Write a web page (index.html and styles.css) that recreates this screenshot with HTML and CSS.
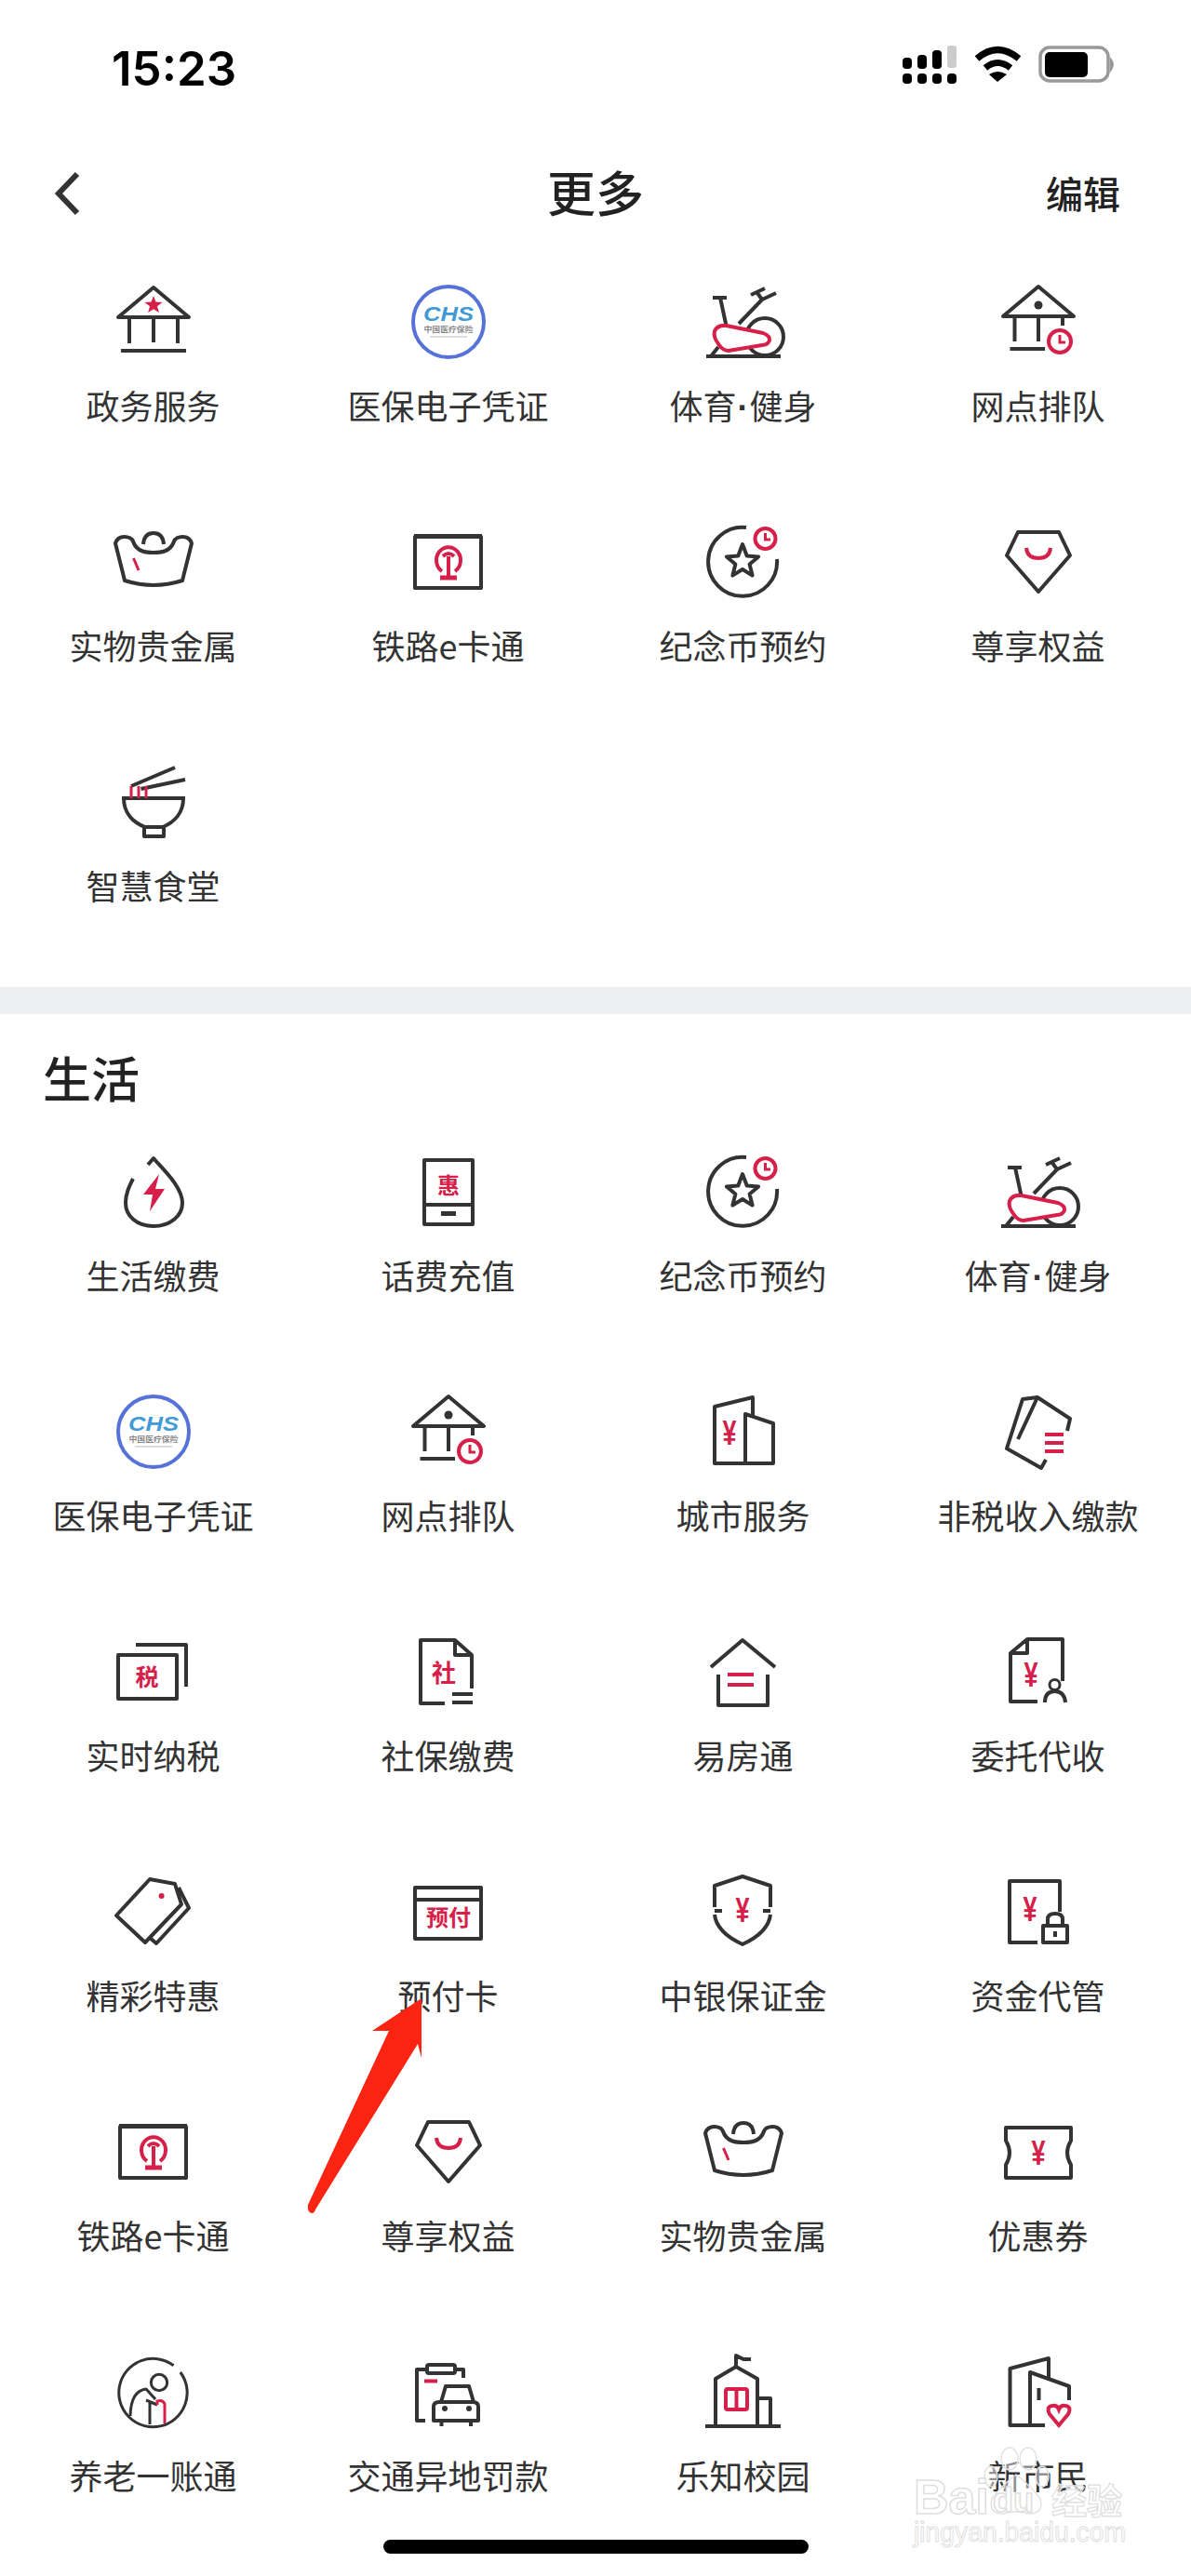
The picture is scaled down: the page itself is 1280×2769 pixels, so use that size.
FILE: index.html
```html
<!DOCTYPE html>
<html lang="zh">
<head>
    <meta charset="utf-8">
    <title>更多</title>
    <link rel="stylesheet" href="styles.css">
</head>
<body>
<svg class="defs" width="0" height="0">
    <symbol id="i-gov" viewBox="0 0 100 100">
        <path class="ln" d="M12 45 L50 13 L88 45 Z M24 45 V73 M50 45 V72 M76 45 V73 M15 81 H85"/>
        <polygon class="rf" points="50,22 52.5,28.6 59.5,28.9 54,33.3 55.9,40.1 50,36.2 44.1,40.1 46,33.3 40.5,28.9 47.5,28.6"/>
    </symbol>
    <symbol id="i-chs" viewBox="0 0 100 100">
        <circle class="blue" cx="50" cy="50" r="38"/>
        <rect x="30" y="65" width="40" height="2" fill="#ddd"/>
    </symbol>
    <symbol id="i-bike" viewBox="0 0 100 100">
        <path class="ln" d="M10 87 H90 M17 24 H32 M25 24 L31.5 54 M45 52 L70 26 L85 19 M58 21 L73 14 M65 19 L70 26 M15 87 L23 77"/>
        <circle class="ln" cx="73" cy="66" r="20"/>
        <path class="rd white" d="M31.5 54 L71 62 Q79 65 78 70 Q76 75 70 75 L34 81 Q28 81 24 75 Q17 66 19 60 Q22 53 31.5 54 Z"/>
    </symbol>
    <symbol id="i-queue" viewBox="0 0 100 100">
        <path class="ln" d="M12 44 L50 12 L88 44 Z M24.5 44 V71 M50 44 V71 M76 44 V54 M19.5 79 H57"/>
        <circle class="dk" cx="50" cy="32" r="4.5"/>
        <circle class="rd" cx="73" cy="71" r="12"/>
        <path class="rd thin" d="M73 64 V72 H79"/>
    </symbol>
    <symbol id="i-ingot" viewBox="0 0 100 100">
        <path class="ln" d="M28 28 C26 22 12 20 9 30 L19 70 Q50 80 81 70 L91 30 C88 20 74 22 72 28 C68 40 56 40 50 40 C44 40 32 40 28 28 Z M39 31 Q40 19 50 19 Q60 19 61 31"/>
        <path class="rd thin" d="M28.5 46 L34 59"/>
    </symbol>
    <symbol id="i-rail" viewBox="0 0 100 100">
        <rect class="ln" x="14" y="23" width="71" height="55"/>
        <path class="ln" d="M13 22 H86 M13 78 H86"/>
        <path class="rd" d="M43 60 A13 14 0 1 1 57 60 M44 44 Q50 38 56 44 M50 44 V66"/>
        <path class="rd thick" d="M41 67 H59"/>
    </symbol>
    <symbol id="i-coin" viewBox="0 0 100 100">
        <path class="ln" d="M53 13 A37 37 0 1 0 86 47"/>
        <polygon class="ln" points="49,31 53.7,43.5 66.1,44.4 56.6,52.5 59.6,64.6 49,58 38.4,64.6 41.4,52.5 31.9,44.4 44.3,43.5"/>
        <circle class="rd" cx="73.5" cy="25" r="11"/>
        <path class="rd thin" d="M73.5 19 V26 H79"/>
    </symbol>
    <symbol id="i-vip" viewBox="0 0 100 100">
        <path class="ln" d="M28 18 H72 L84 43 L50 82 L16 43 Z"/>
        <path class="rd" d="M37 35 Q38 46 50 46 Q62 46 63 35"/>
    </symbol>
    <symbol id="i-bowl" viewBox="0 0 100 100">
        <path class="ln" d="M16 46 H84 M18 46 C18 62 28 72 41 77 H60 C72 72 82 62 82 46 M40 77 V87 H61 V77 M26 33 L73 13 M36.5 36 L84 26"/>
        <path class="rd thin" d="M26 33 V46 M34 33 V46 M42 33 V46"/>
    </symbol>
    <symbol id="i-drop" viewBox="0 0 100 100">
        <path class="ln" d="M44 21 L50 14 C58 24 81 44 81 62 C81 76 68 87 50 87 C32 87 20 76 20 62 C20 52 24 44 28 36"/>
        <polygon class="rf" points="56,31 39,53 49,53 46,71 62,47 52,47"/>
    </symbol>
    <symbol id="i-phone" viewBox="0 0 100 100">
        <rect class="ln" x="24" y="16" width="52" height="69"/>
        <path class="ln" d="M24 64 H76"/>
        <rect class="dk" x="42" y="71" width="16" height="5"/>
    </symbol>
    <symbol id="i-city" viewBox="0 0 100 100">
        <path class="ln" d="M60 33 V13 L19 23 V84 H82 V41 L52 31 V84"/>
    </symbol>
    <symbol id="i-cards" viewBox="0 0 100 100">
        <path class="ln" d="M81 49 L84 36 L49 13 L28 58 M49 13 L33 15 L16 68 L53 89 L58 80"/>
        <path class="rd" d="M57 53 H77 M57 62 H77 M57 71 H77"/>
    </symbol>
    <symbol id="i-tax" viewBox="0 0 100 100">
        <path class="ln" d="M31 21 H85 V66"/>
        <rect class="ln" x="12" y="32" width="63" height="47"/>
    </symbol>
    <symbol id="i-social" viewBox="0 0 100 100">
        <path class="ln" d="M46 84 H20 V16 H57 L75 32 V68 M57 16 V32 H75 M54 74 H76 M54 83 H76"/>
    </symbol>
    <symbol id="i-house" viewBox="0 0 100 100">
        <path class="ln" d="M15 45 L49 16 L84 45 M23 53 V86 H76 V53"/>
        <path class="rd" d="M33 53 H61 M33 64 H61"/>
    </symbol>
    <symbol id="i-entrust" viewBox="0 0 100 100">
        <path class="ln" d="M76 60 V15 H38 L20 30 V82 H49 M38 15 V30 H20 M57 83 Q57 71 67.5 71 Q78 71 79 83"/>
        <circle class="ln thin" cx="67.5" cy="64" r="5.5"/>
    </symbol>
    <symbol id="i-tags" viewBox="0 0 100 100">
        <path class="ln" d="M46 15 L73 20 L80 42 L41 83 L10 54 Z M77 24 L88 46 L53 84 L46 78"/>
        <circle class="rf" cx="58.6" cy="33" r="3"/>
    </symbol>
    <symbol id="i-prepaid" viewBox="0 0 100 100">
        <rect class="ln" x="14" y="24" width="71" height="55"/>
        <path class="ln" d="M13 37 H86"/>
    </symbol>
    <symbol id="i-shield" viewBox="0 0 100 100">
        <path class="ln" d="M19 45 V22 L49 12 L79 22 V45 M19 53 Q21 72 49 85 Q77 72 79 53 M19 49 H27 M71 49 H79"/>
    </symbol>
    <symbol id="i-lock" viewBox="0 0 100 100">
        <path class="ln" d="M49 83 H19 V17 H73 V50"/>
        <rect class="ln" x="55" y="65" width="26" height="18"/>
        <path class="ln" d="M60 65 V58 Q60 52 68 52 Q76 52 76 58 V65"/>
        <rect class="dk" x="66" y="71" width="4" height="6"/>
    </symbol>
    <symbol id="i-coupon" viewBox="0 0 100 100">
        <path class="ln" d="M15 24 H85 V38 Q77 51 85 64 V78 H15 V64 Q23 51 15 38 Z"/>
    </symbol>
    <symbol id="i-pension" viewBox="0 0 100 100">
        <path class="ln thin" d="M71.5 21.7 A36.7 36.7 0 1 0 78.8 29"/>
        <circle class="ln thin" cx="56" cy="40" r="8.7"/>
        <path class="ln thin" d="M25 76 Q25.5 49 42 47 L52 58 M42 59 L54 64 M46 62 V85"/>
        <path class="rd thin" d="M54 64 V60 Q60 58 62 63 V84"/>
    </symbol>
    <symbol id="i-fine" viewBox="0 0 100 100">
        <path class="ln" d="M27 26 H16 V81 H25 M57 26 H66 V35 M42 61 L47 44 H72 L77 61 M34 77 V66 Q34 61 40 61 H76 Q82 61 82 66 V81 H34 Z M42.5 81 V87 M74 81 V87"/>
        <rect class="ln" x="27" y="21" width="30" height="9" rx="2"/>
        <path class="rd" d="M24 38.5 H38"/>
        <circle class="dk" cx="46" cy="68" r="3"/>
        <circle class="dk" cx="72" cy="68" r="3"/>
    </symbol>
    <symbol id="i-school" viewBox="0 0 100 100">
        <path class="ln" d="M9 87 H90 M20 87 V36 L42 23 L65 36 V87 M65 57 H79 V87 M42 23 V11 L50 15 H58"/>
        <rect class="rd" x="31" y="47" width="23" height="22" rx="2"/>
        <path class="rd" d="M42.5 47 V69"/>
    </symbol>
    <symbol id="i-citizen" viewBox="0 0 100 100">
        <path class="ln" d="M57 86 H19.5 V25 L61 14 V36 M41 86 V29 L83 44 V59 M50.5 46 V59"/>
        <path class="rd" d="M72 86 L62 74 Q58 66 65 65 Q70 64 72 69 Q74 64 79 65 Q86 66 82 74 Z"/>
    </symbol>
</svg>

<div class="page">
    <div class="status">
        <span class="time">15:23</span>
        <svg class="status-icons" viewBox="950 40 260 70">
            <g fill="#000">
                <rect x="970" y="82" width="10" height="11" rx="4"/>
                <rect x="986" y="82" width="10" height="11" rx="4"/>
                <rect x="1002" y="82" width="10" height="11" rx="4"/>
                <rect x="1018" y="82" width="10" height="11" rx="4"/>
                <rect x="970" y="65" width="10" height="12" rx="4"/>
                <rect x="986" y="62" width="10" height="15" rx="4"/>
                <rect x="1002" y="57" width="10" height="20" rx="4"/>
            </g>
            <rect x="1018" y="52" width="10" height="24" rx="3" fill="#ccc"/>
            <path d="M1050 66 Q1072 47 1095 66 M1059 76 Q1072 65 1086 76" fill="none" stroke="#000" stroke-width="7"/>
            <path d="M1063 83 Q1072 77 1082 83 L1072 91 Z" fill="#000"/>
            <rect x="1118" y="54" width="73" height="36" rx="10" fill="none" stroke="#999" stroke-width="3.5"/>
            <rect x="1123" y="59" width="46" height="27" rx="5" fill="#000"/>
            <path d="M1194 67 Q1198 72 1194 78 Z" fill="#999" stroke="#999" stroke-width="2"/>
        </svg>
    </div>

    <div class="nav">
        <svg class="back" viewBox="0 0 30 50"><path d="M25 4 L5 25 L25 46"/></svg>
        <div class="nav-title">更多</div>
        <div class="nav-edit">编辑</div>
    </div>

    <div class="grid first">
        <div class="item"><svg class="ic" viewBox="0 0 100 100"><use href="#i-gov"/></svg><span class="lbl">政务服务</span></div>
        <div class="item"><svg class="ic" viewBox="0 0 100 100"><use href="#i-chs"/><text class="chs" x="50" y="49" textLength="54" lengthAdjust="spacingAndGlyphs">CHS</text><text class="chs-sub" x="50" y="61" textLength="53" lengthAdjust="spacingAndGlyphs">中国医疗保险</text></svg><span class="lbl">医保电子凭证</span></div>
        <div class="item"><svg class="ic" viewBox="0 0 100 100"><use href="#i-bike"/></svg><span class="lbl">体育<span class="mid">·</span>健身</span></div>
        <div class="item"><svg class="ic" viewBox="0 0 100 100"><use href="#i-queue"/></svg><span class="lbl">网点排队</span></div>
        <div class="item"><svg class="ic" viewBox="0 0 100 100"><use href="#i-ingot"/></svg><span class="lbl">实物贵金属</span></div>
        <div class="item"><svg class="ic" viewBox="0 0 100 100"><use href="#i-rail"/></svg><span class="lbl">铁路e卡通</span></div>
        <div class="item"><svg class="ic" viewBox="0 0 100 100"><use href="#i-coin"/></svg><span class="lbl">纪念币预约</span></div>
        <div class="item"><svg class="ic" viewBox="0 0 100 100"><use href="#i-vip"/></svg><span class="lbl">尊享权益</span></div>
        <div class="item"><svg class="ic" viewBox="0 0 100 100"><use href="#i-bowl"/></svg><span class="lbl">智慧食堂</span></div>
    </div>

    <div class="divider"></div>

    <h2 class="section-title">生活</h2>

    <div class="grid">
        <div class="item"><svg class="ic" viewBox="0 0 100 100"><use href="#i-drop"/></svg><span class="lbl">生活缴费</span></div>
        <div class="item"><svg class="ic" viewBox="0 0 100 100"><use href="#i-phone"/><text class="glyph" x="50" y="52" font-size="24">惠</text></svg><span class="lbl">话费充值</span></div>
        <div class="item"><svg class="ic" viewBox="0 0 100 100"><use href="#i-coin"/></svg><span class="lbl">纪念币预约</span></div>
        <div class="item"><svg class="ic" viewBox="0 0 100 100"><use href="#i-bike"/></svg><span class="lbl">体育<span class="mid">·</span>健身</span></div>

        <div class="item"><svg class="ic" viewBox="0 0 100 100"><use href="#i-chs"/><text class="chs" x="50" y="49" textLength="54" lengthAdjust="spacingAndGlyphs">CHS</text><text class="chs-sub" x="50" y="61" textLength="53" lengthAdjust="spacingAndGlyphs">中国医疗保险</text></svg><span class="lbl">医保电子凭证</span></div>
        <div class="item"><svg class="ic" viewBox="0 0 100 100"><use href="#i-queue"/></svg><span class="lbl">网点排队</span></div>
        <div class="item"><svg class="ic" viewBox="0 0 100 100"><use href="#i-city"/><text class="yen" x="35" y="64" textLength="15" lengthAdjust="spacingAndGlyphs">¥</text></svg><span class="lbl">城市服务</span></div>
        <div class="item"><svg class="ic" viewBox="0 0 100 100"><use href="#i-cards"/></svg><span class="lbl">非税收入缴款</span></div>

        <div class="item"><svg class="ic" viewBox="0 0 100 100"><use href="#i-tax"/><text class="glyph" x="43" y="65" font-size="25">税</text></svg><span class="lbl">实时纳税</span></div>
        <div class="item"><svg class="ic" viewBox="0 0 100 100"><use href="#i-social"/><text class="glyph" x="45" y="61" font-size="26">社</text></svg><span class="lbl">社保缴费</span></div>
        <div class="item"><svg class="ic" viewBox="0 0 100 100"><use href="#i-house"/></svg><span class="lbl">易房通</span></div>
        <div class="item"><svg class="ic" viewBox="0 0 100 100"><use href="#i-entrust"/><text class="yen" x="42" y="66" textLength="15" lengthAdjust="spacingAndGlyphs">¥</text></svg><span class="lbl">委托代收</span></div>

        <div class="item"><svg class="ic" viewBox="0 0 100 100"><use href="#i-tags"/></svg><span class="lbl">精彩特惠</span></div>
        <div class="item"><svg class="ic" viewBox="0 0 100 100"><use href="#i-prepaid"/><text class="glyph" x="50" y="65" font-size="24">预付</text></svg><span class="lbl">预付卡</span></div>
        <div class="item"><svg class="ic" viewBox="0 0 100 100"><use href="#i-shield"/><text class="yen" x="49" y="61" textLength="15" lengthAdjust="spacingAndGlyphs">¥</text></svg><span class="lbl">中银保证金</span></div>
        <div class="item"><svg class="ic" viewBox="0 0 100 100"><use href="#i-lock"/><text class="yen" x="41" y="60" textLength="15" lengthAdjust="spacingAndGlyphs">¥</text></svg><span class="lbl">资金代管</span></div>

        <div class="item"><svg class="ic" viewBox="0 0 100 100"><use href="#i-rail"/></svg><span class="lbl">铁路e卡通</span></div>
        <div class="item"><svg class="ic" viewBox="0 0 100 100"><use href="#i-vip"/></svg><span class="lbl">尊享权益</span></div>
        <div class="item"><svg class="ic" viewBox="0 0 100 100"><use href="#i-ingot"/></svg><span class="lbl">实物贵金属</span></div>
        <div class="item"><svg class="ic" viewBox="0 0 100 100"><use href="#i-coupon"/><text class="yen" x="50" y="64" textLength="15" lengthAdjust="spacingAndGlyphs">¥</text></svg><span class="lbl">优惠券</span></div>

        <div class="item"><svg class="ic" viewBox="0 0 100 100"><use href="#i-pension"/></svg><span class="lbl">养老一账通</span></div>
        <div class="item"><svg class="ic" viewBox="0 0 100 100"><use href="#i-fine"/></svg><span class="lbl">交通异地罚款</span></div>
        <div class="item"><svg class="ic" viewBox="0 0 100 100"><use href="#i-school"/></svg><span class="lbl">乐知校园</span></div>
        <div class="item"><svg class="ic" viewBox="0 0 100 100"><use href="#i-citizen"/></svg><span class="lbl">新市民</span></div>
    </div>

    <div class="home-bar"></div>

    <!-- annotation and watermark sit on top of the screenshot -->
    <svg class="arrow" viewBox="0 0 130 240">
        <path d="M128 3 L75 38 L93 38 L6 225 Q5 233 10 234 Q13 234 14 230 L124 52 L128 67 Z"/>
    </svg>
    <svg class="watermark" viewBox="0 0 280 140">
        <g class="wm-paw">
            <ellipse cx="125" cy="33" rx="9" ry="12"/>
            <ellipse cx="145" cy="33" rx="9" ry="12"/>
            <ellipse cx="105" cy="52" rx="7" ry="11"/>
            <ellipse cx="160" cy="52" rx="7" ry="11"/>
            <path d="M132 50 Q148 62 158 76 Q162 92 146 92 Q132 88 118 92 Q102 92 106 76 Q116 62 132 50 Z"/>
        </g>
        <text class="wm-big" x="22" y="92">Bai</text>
        <text class="wm-big wm-du" x="107" y="90">du</text>
        <text class="wm-cn" x="170" y="92">经验</text>
        <text class="wm-url" x="22" y="122" textLength="228" lengthAdjust="spacingAndGlyphs">jingyan.baidu.com</text>
    </svg>
</div>
</body>
</html>
```

FILE: styles.css
```css
body {
    margin: 0;
    padding: 0;
    background: #fff;
    color: #333;
    font-family: "Noto Sans CJK SC", "Liberation Sans", sans-serif;
}
.defs {
    position: absolute;
}
.page {
    position: relative;
    width: 1280px;
    height: 2769px;
    overflow: hidden;
    background: #fff;
}

/* status bar */
.status {
    display: flex;
    align-items: center;
    justify-content: space-between;
    height: 144px;
    padding-left: 120px;
    padding-right: 70px;
    margin-bottom: 32px;
}
.time {
    font-family: Inter, "Liberation Sans", sans-serif;
    font-size: 51px;
    font-weight: 600;
    color: #000;
    margin-top: 2px;
}
.status-icons {
    width: 260px;
    height: 70px;
}

/* nav */
.nav {
    display: grid;
    grid-template-columns: 1fr auto 1fr;
    align-items: center;
    height: 60px;
    padding: 0 58px;
}
.back {
    width: 30px;
    height: 50px;
}
.back path {
    fill: none;
    stroke: #333;
    stroke-width: 6;
}
.nav-title {
    font-size: 52px;
    line-height: 60px;
    font-weight: 500;
    color: #222;
    margin-bottom: 4px;
}
.nav-edit {
    font-size: 40px;
    line-height: 60px;
    font-weight: 500;
    color: #222;
    text-align: right;
    margin-right: 18px;
    margin-bottom: 2px;
}

/* grids */
.grid {
    display: grid;
    grid-template-columns: repeat(4, 1fr);
    grid-auto-rows: 167px;
    row-gap: 91px;
    padding: 0 6px;
    margin-top: 43px;
}
.grid.first {
    margin-top: 60px;
}
.item {
    display: flex;
    flex-direction: column;
    align-items: center;
}
.ic {
    width: 100px;
    height: 100px;
    flex: none;
}
.lbl {
    margin-top: 14px;
    font-size: 36px;
    line-height: 50px;
    color: #333;
    white-space: nowrap;
}
.mid {
    font-family: "Liberation Sans", sans-serif;
    font-weight: bold;
    margin: 0 1px;
}

.divider {
    height: 29px;
    margin-top: 82px;
    background: #eeeff2;
}
.section-title {
    margin: 38px 0 0;
    padding-left: 46px;
    font-size: 52px;
    line-height: 60px;
    font-weight: 500;
    color: #222;
}
.home-bar {
    width: 457px;
    height: 15px;
    margin: 42px auto 0;
    border-radius: 8px;
    background: #000;
}

/* icon strokes */
.ln {
    fill: none;
    stroke: #333;
    stroke-width: 4;
    stroke-linejoin: round;
}
.rd {
    fill: none;
    stroke: #d6204a;
    stroke-width: 4;
}
.thin {
    stroke-width: 3;
}
.thick {
    stroke-width: 5;
}
.white {
    fill: #fff;
}
.rf {
    fill: #d6204a;
}
.dk {
    fill: #333;
}
.blue {
    fill: #fff;
    stroke: #5672d8;
    stroke-width: 4;
}
.chs {
    font-family: "Liberation Sans", sans-serif;
    font-size: 22px;
    font-weight: bold;
    font-style: italic;
    fill: #3f9ad6;
    text-anchor: middle;
}
.chs-sub {
    font-size: 8px;
    font-weight: bold;
    fill: #888;
    text-anchor: middle;
}
.glyph {
    font-family: "Noto Sans CJK SC", sans-serif;
    font-weight: bold;
    fill: #d6204a;
    text-anchor: middle;
}
.yen {
    font-family: "Liberation Sans", sans-serif;
    font-size: 36px;
    font-weight: bold;
    fill: #d6204a;
    text-anchor: middle;
}

/* arrow overlay */
.arrow {
    position: absolute;
    left: 325px;
    top: 2145px;
    width: 130px;
    height: 240px;
}
.arrow path {
    fill: #fb2412;
}

/* watermark overlay */
.watermark {
    position: absolute;
    left: 960px;
    top: 2610px;
    width: 280px;
    height: 140px;
}
.wm-paw {
    fill: rgba(255, 255, 255, 0.45);
    stroke: #e2e2e2;
    stroke-width: 1.5;
}
.wm-big {
    font-family: "Liberation Sans", sans-serif;
    font-size: 52px;
    font-weight: bold;
    fill: rgba(255, 255, 255, 0.7);
    stroke: #dedede;
    stroke-width: 1.5;
}
.wm-du {
    font-size: 36px;
}
.wm-cn {
    font-size: 38px;
    font-weight: bold;
    fill: rgba(255, 255, 255, 0.7);
    stroke: #dedede;
    stroke-width: 1.2;
}
.wm-url {
    font-family: "Liberation Sans", sans-serif;
    font-size: 30px;
    fill: rgba(255, 255, 255, 0.7);
    stroke: #dedede;
    stroke-width: 1;
}
```
